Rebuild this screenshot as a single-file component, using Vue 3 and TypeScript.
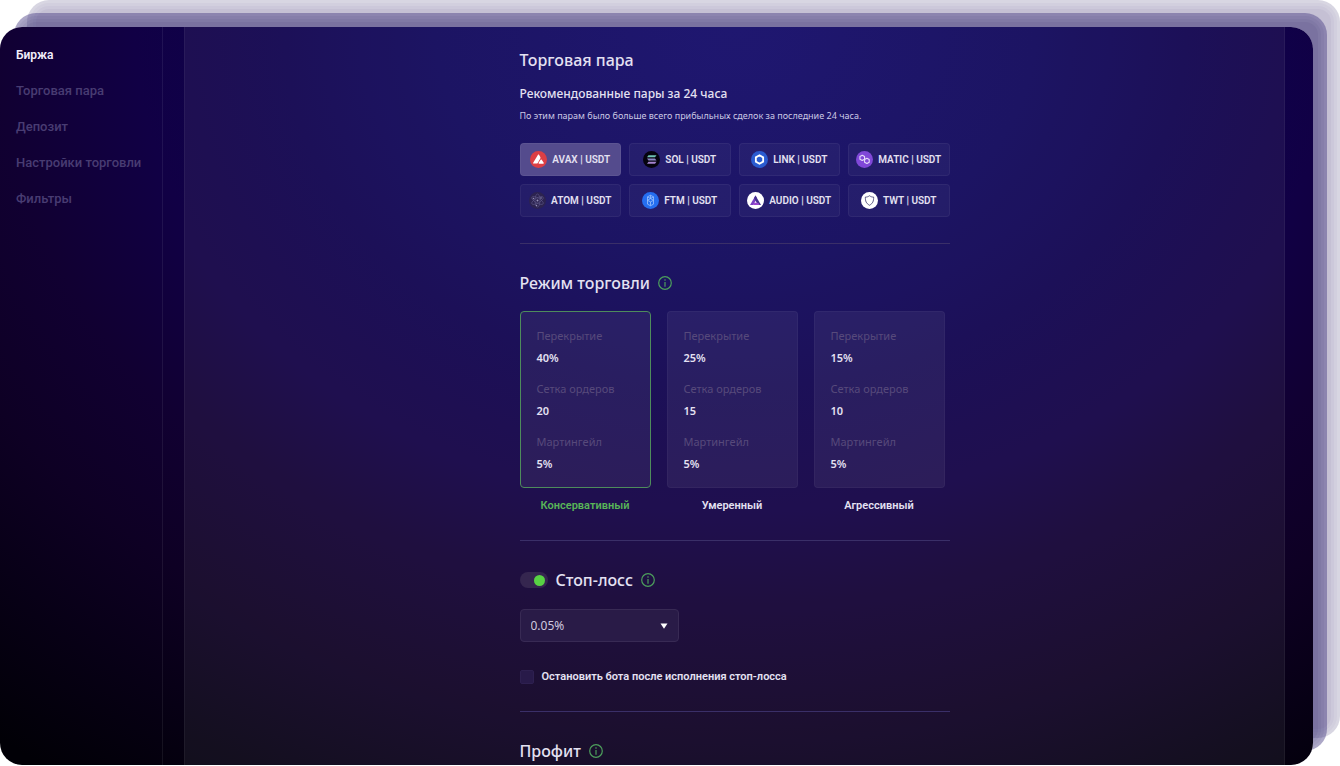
<script setup lang="ts">
import { ref } from 'vue'

type Coin = 'avax' | 'sol' | 'link' | 'matic' | 'atom' | 'ftm' | 'audio' | 'twt'

const sections = ['Биржа', 'Торговая пара', 'Депозит', 'Настройки торговли', 'Фильтры']
const activeSection = ref(0)

const coins: Coin[] = ['avax', 'sol', 'link', 'matic', 'atom', 'ftm', 'audio', 'twt']
const activeCoin = ref<Coin>('avax')

interface Mode {
  id: string
  name: string
  cover: string
  grid: string
  martingale: string
}

const modes: Mode[] = [
  { id: 'safe', name: 'Консервативный', cover: '40%', grid: '20', martingale: '5%' },
  { id: 'medium', name: 'Умеренный', cover: '25%', grid: '15', martingale: '5%' },
  { id: 'risky', name: 'Агрессивный', cover: '15%', grid: '10', martingale: '5%' },
]
const activeMode = ref('safe')

const stopLoss = ref(true)
const stopLossValue = ref('0.05%')
const stopBot = ref(false)
</script>

<template>
  <div class="stage">
    <div class="window">
      <nav class="sidebar" aria-label="Разделы">
        <a
          v-for="(name, i) in sections"
          :key="name"
          href="#"
          class="nav-link"
          :class="{ active: i === activeSection }"
          @click.prevent="activeSection = i"
          >{{ name }}</a
        >
      </nav>

      <main class="panel">
        <div class="content">
          <section class="block">
            <h2 class="title">Торговая пара</h2>
            <h3 class="subtitle">Рекомендованные пары за 24 часа</h3>
            <p class="hint">По этим парам было больше всего прибыльных сделок за последние 24 часа.</p>
            <div class="pairs">
              <button
                v-for="coin in coins"
                :key="coin"
                type="button"
                class="pair"
                :class="{ active: coin === activeCoin }"
                :aria-pressed="coin === activeCoin"
                @click="activeCoin = coin"
              >
                <svg class="coin" viewBox="0 0 34 34" aria-hidden="true">
                  <g v-if="coin === 'avax'">
                    <circle cx="17" cy="17" r="17" fill="#dc3f45" />
                    <path
                      d="M16 7.5c.6-1 1.400-1 2 0l2.600 4.700c.5.9.5 1.700 0 2.600l-5.200 9.200c-.5.8-1.200 1.200-2.200 1.200H7.500c-1.200 0-1.700-.8-1.100-1.800z"
                      fill="#fff"
                    />
                    <path
                      d="M21.300 17.500c.6-1 1.500-1 2.100 0l4 6.200c.6 1 .1 1.600-1 1.600h-8c-1.200 0-1.700-.7-1.100-1.600z"
                      fill="#fff"
                    />
                  </g>
                  <g v-else-if="coin === 'sol'">
                    <circle cx="17" cy="17" r="17" fill="#05030f" />
                    <path d="M11 8.500h16l-3 4H8z" fill="#6fc3b4" />
                    <path d="M8 15h16l3 4H11z" fill="#8b86c4" />
                    <path d="M11 21.500h16l-3 4H8z" fill="#a583cf" />
                  </g>
                  <g v-else-if="coin === 'link'">
                    <circle cx="17" cy="17" r="17" fill="#2a5bd0" />
                    <path
                      d="M17 8.500l7.300 4.250v8.500L17 25.500l-7.300-4.250v-8.500z"
                      fill="none"
                      stroke="#fff"
                      stroke-width="3.600"
                    />
                  </g>
                  <g v-else-if="coin === 'matic'">
                    <circle cx="17" cy="17" r="17" fill="#8048d8" />
                    <g fill="none" stroke="#e6dcfa" stroke-width="2.200" stroke-linejoin="round">
                      <path d="M12.500 8.500l4.600 2.600v5.300l-4.600 2.600-4.600-2.600v-5.300z" />
                      <path d="M21.800 14.500l4.600 2.600v5.300L21.800 25l-4.600-2.600v-5.300z" />
                    </g>
                  </g>
                  <g v-else-if="coin === 'atom'">
                    <circle cx="17" cy="17" r="17" fill="#2c2350" />
                    <g fill="none" stroke="#5f5888" stroke-width="1.200">
                      <ellipse cx="17" cy="17" rx="5" ry="13" />
                      <ellipse cx="17" cy="17" rx="5" ry="13" transform="rotate(60 17 17)" />
                      <ellipse cx="17" cy="17" rx="5" ry="13" transform="rotate(120 17 17)" />
                    </g>
                    <circle cx="17" cy="17" r="2" fill="#9791b8" />
                    <circle cx="9" cy="13" r="1.500" fill="#9791b8" />
                    <circle cx="24" cy="12" r="1.500" fill="#9791b8" />
                    <circle cx="15" cy="27" r="1.500" fill="#9791b8" />
                  </g>
                  <g v-else-if="coin === 'ftm'">
                    <circle cx="17" cy="17" r="17" fill="#256ef0" />
                    <g fill="none" stroke="#9fc3fb" stroke-width="1.600" stroke-linejoin="round">
                      <path d="M17 6.500l6 3.200v14.600l-6 3.200-6-3.200V9.700z" />
                      <path d="M11 9.700l6 3.300 6-3.300M17 6.500V13M11 16.500l6-3.300 6 3.300-6 3.300zM17 19.800v7.500" />
                    </g>
                  </g>
                  <g v-else-if="coin === 'audio'">
                    <circle cx="17" cy="17" r="17" fill="#fff" />
                    <path d="M17 7l3.200 5.500-7.700 13.300H6z" fill="#7a3fc4" />
                    <path d="M17 7l11 18.800h-6.200L14 12.200z" fill="#45318f" />
                    <path d="M14.500 21.500h8l2.600 4.300H12z" fill="#9a46cf" />
                  </g>
                  <g v-else>
                    <circle cx="17" cy="17" r="17" fill="#fff" />
                    <path
                      d="M17 7.500c2.700 2 5.300 2.700 8.300 2.700 0 8-1.300 12.300-8.300 16.300-7-4-8.300-8.300-8.300-16.300 3 0 5.600-.7 8.300-2.700z"
                      fill="none"
                      stroke="#595683"
                      stroke-width="2"
                      stroke-linejoin="round"
                    />
                  </g>
                </svg>
                <span>{{ coin.toUpperCase() }} | USDT</span>
              </button>
            </div>
          </section>

          <section class="block">
            <div class="heading">
              <h2 class="title">Режим торговли</h2>
              <button type="button" class="info" aria-label="О режиме торговли">
                <svg viewBox="0 0 14 14" aria-hidden="true">
                  <circle cx="7" cy="7" r="6.300" />
                  <path d="M7 3.300v1.400M7 6v4.700" />
                </svg>
              </button>
            </div>
            <div class="modes">
              <label v-for="mode in modes" :key="mode.id" class="mode">
                <input v-model="activeMode" class="mode-input" type="radio" name="mode" :value="mode.id" />
                <span class="card">
                  <span class="term">Перекрытие</span>
                  <span class="value">{{ mode.cover }}</span>
                  <span class="term">Сетка ордеров</span>
                  <span class="value">{{ mode.grid }}</span>
                  <span class="term">Мартингейл</span>
                  <span class="value">{{ mode.martingale }}</span>
                </span>
                <span class="mode-name">{{ mode.name }}</span>
              </label>
            </div>
          </section>

          <section class="block">
            <div class="heading">
              <input id="stop-loss" v-model="stopLoss" class="switch" type="checkbox" role="switch" />
              <h2 class="title"><label for="stop-loss">Стоп-лосс</label></h2>
              <button type="button" class="info" aria-label="О стоп-лоссе">
                <svg viewBox="0 0 14 14" aria-hidden="true">
                  <circle cx="7" cy="7" r="6.300" />
                  <path d="M7 3.300v1.400M7 6v4.700" />
                </svg>
              </button>
            </div>
            <div class="select-box">
              <select v-model="stopLossValue" class="select" aria-label="Стоп-лосс">
                <option>0.05%</option>
                <option>0.1%</option>
                <option>0.5%</option>
              </select>
              <svg class="arrow" viewBox="0 0 8 6" aria-hidden="true"><path d="M.5.500h7L4 5.800z" /></svg>
            </div>
            <label class="check">
              <input v-model="stopBot" type="checkbox" />
              <span>Остановить бота после исполнения стоп-лосса</span>
            </label>
          </section>

          <section class="block">
            <div class="heading">
              <h2 class="title">Профит</h2>
              <button type="button" class="info" aria-label="О профите">
                <svg viewBox="0 0 14 14" aria-hidden="true">
                  <circle cx="7" cy="7" r="6.300" />
                  <path d="M7 3.300v1.400M7 6v4.700" />
                </svg>
              </button>
            </div>
          </section>
        </div>
      </main>
    </div>
  </div>
</template>

<style>
body {
  background: #fff;
}
</style>

<style scoped>
.stage {
  box-sizing: border-box;
  display: flex;
  min-height: 100vh;
  padding: 27px 27px 1px 0;
  overflow: hidden;
  font-family: 'Noto Sans', 'Open Sans', sans-serif;
  color: #e4e1f2;
}

.window {
  flex: 1;
  display: flex;
  gap: 21px;
  padding-right: 28px;
  border-radius: 22px;
  background: radial-gradient(
    ellipse 88% 125% at 56% 0,
    #110968 0,
    #0e065a 26%,
    #0e024e 39%,
    #110045 52%,
    #110032 64%,
    #0e0024 76%,
    #070015 88%,
    #010006 100%
  );
  box-shadow:
    14px -14px 0 -9px rgba(70, 60, 120, 0.1),
    14px -14px 0 -6px rgba(70, 60, 120, 0.08),
    14px -14px 0 -3px rgba(70, 60, 120, 0.08),
    14px -14px 0 0 rgba(70, 60, 130, 0.45),
    27px -27px 0 -9px rgba(70, 60, 120, 0.05),
    27px -27px 0 -6px rgba(70, 60, 120, 0.04),
    27px -27px 0 -3px rgba(70, 60, 120, 0.04),
    27px -27px 0 0 rgba(60, 50, 110, 0.2);
}

.sidebar {
  box-sizing: border-box;
  flex: 0 0 163px;
  display: flex;
  flex-direction: column;
  align-items: flex-start;
  gap: 16px;
  padding: 18px 0 0 16px;
  border-right: 1px solid rgba(255, 255, 255, 0.07);
}

.nav-link {
  font: 500 13px/20px Roboto, sans-serif;
  color: #483c72;
  text-decoration: none;
  white-space: nowrap;
}

.nav-link.active {
  font-weight: 600;
  font-size: 12px;
  color: #f1eefb;
}

.panel {
  flex: 1;
  min-width: 0;
  padding: 0 16px;
  border: solid rgba(255, 255, 255, 0.05);
  border-width: 0 1px;
  background: rgba(255, 255, 255, 0.058);
}

.content {
  max-width: 430px;
  margin: 0 auto;
}

.block {
  padding: 27px 0 26px;
  border-top: 1px solid #3a2f68;
}

.block:first-child {
  padding-top: 21px;
  border-top: 0;
}

.block:last-child {
  padding-bottom: 0;
}

.heading {
  display: flex;
  align-items: center;
  gap: 8px;
}

.title {
  margin: 0;
  font-weight: 500;
  font-size: 16px;
  line-height: 24px;
}

.subtitle {
  margin: 13px 0 5px;
  font-weight: 500;
  font-size: 12px;
  line-height: 18px;
}

.hint {
  margin: 0 0 19px;
  font-size: 9px;
  line-height: 16px;
  color: #cbc8e4;
}

.pairs {
  display: grid;
  grid-template-columns: repeat(4, 1fr);
  gap: 8px;
}

.pair {
  display: flex;
  align-items: center;
  justify-content: center;
  gap: 5px;
  height: 33px;
  padding: 0;
  border: 1px solid rgba(255, 255, 255, 0.05);
  border-radius: 4px;
  background: rgba(255, 255, 255, 0.04);
  font: 600 10px/16px Roboto, sans-serif;
  color: #e4e1f2;
  white-space: nowrap;
}

.pair.active {
  background: #544b8d;
}

.coin {
  width: 17px;
  height: 17px;
}

.info {
  display: flex;
  padding: 0;
  border: 0;
  background: none;
}

.info svg {
  width: 14px;
  height: 14px;
  fill: none;
  stroke: #4d9f5c;
  stroke-width: 1.2;
}

.modes {
  display: grid;
  grid-template-columns: repeat(3, 131px);
  gap: 16px;
  margin-top: 16px;
}

.mode {
  display: flex;
  flex-direction: column;
  gap: 10px;
  position: relative;
}

.mode-input {
  position: absolute;
  opacity: 0;
}

.card {
  display: flex;
  flex-direction: column;
  padding: 16px 16px 15px;
  border: 1px solid rgba(255, 255, 255, 0.04);
  border-radius: 4px;
  background: rgba(255, 255, 255, 0.06);
  font-size: 11px;
  line-height: 16px;
}

.mode-input:checked + .card {
  border-color: #4e8c5c;
}

.term {
  margin-bottom: 6px;
  color: #574a7b;
}

.value {
  font-weight: 600;
}

.value + .term {
  margin-top: 15px;
}

.mode-name {
  font-family: Roboto, sans-serif;
  font-weight: 600;
  font-size: 11px;
  line-height: 16px;
  text-align: center;
}

.mode-input:checked ~ .mode-name {
  color: #58b558;
}

.switch {
  appearance: none;
  display: flex;
  align-items: center;
  box-sizing: border-box;
  width: 28px;
  height: 16px;
  margin: 0;
  padding: 0 3px;
  border-radius: 8px;
  background: #35264f;
}

.switch::before {
  content: '';
  width: 11px;
  height: 11px;
  border-radius: 50%;
  background: #8b84a5;
}

.switch:checked::before {
  margin-left: auto;
  background: #58d244;
}

.select-box {
  position: relative;
  width: 159px;
  margin-top: 17px;
}

.select {
  appearance: none;
  display: block;
  width: 100%;
  height: 33px;
  padding: 0 28px 0 10px;
  border: 1px solid #382a54;
  border-radius: 4px;
  background: #291b47;
  font: 400 12px/16px 'Noto Sans', 'Open Sans', sans-serif;
  color: #cfcadf;
}

.arrow {
  position: absolute;
  top: 14px;
  right: 11px;
  width: 8px;
  height: 6px;
  fill: #fff;
  pointer-events: none;
}

.check {
  display: flex;
  align-items: center;
  gap: 8px;
  margin-top: 27px;
  font-family: Roboto, sans-serif;
  font-weight: 600;
  font-size: 11px;
  line-height: 16px;
}

.check input {
  appearance: none;
  width: 14px;
  height: 14px;
  margin: 0;
  border: 1px solid #2e2050;
  border-radius: 2px;
  background: #281a49;
  box-sizing: border-box;
}

.check input:checked {
  background: #58d244;
}
</style>
